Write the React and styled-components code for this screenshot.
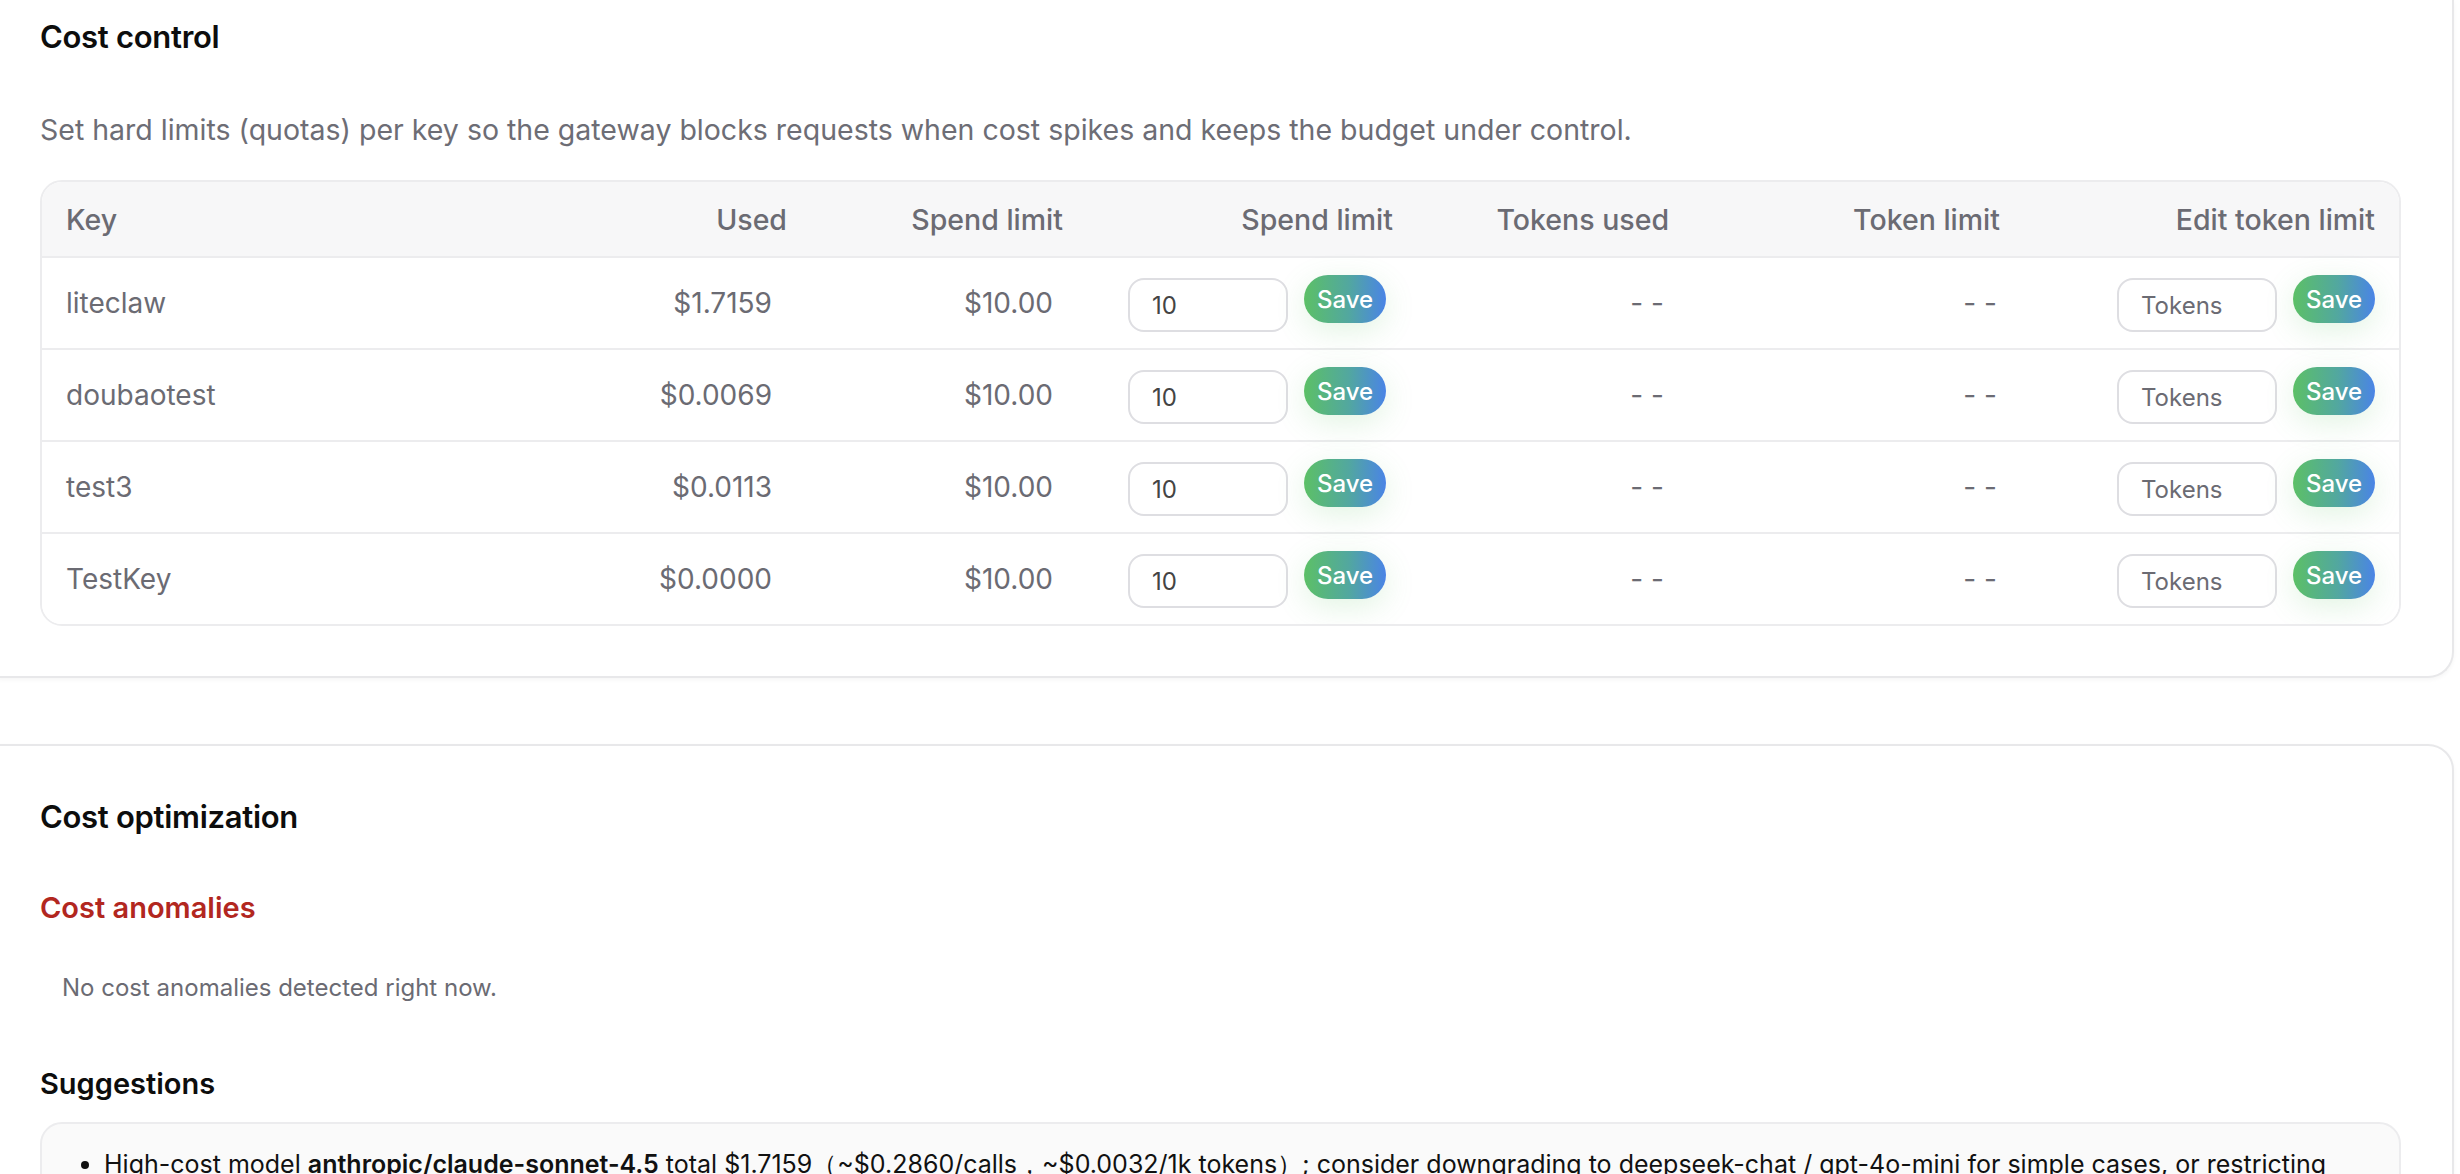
import React from "react";
import styled, { createGlobalStyle } from "styled-components";

const Global = createGlobalStyle`
  html, body { margin: 0; padding: 0; background: #fff; }
  body { font-family: Inter, "Noto Sans", sans-serif; color: #111; }
`;

const Page = styled.div`
  width: 2460px; height: 1174px; overflow: hidden;
  display: flex; flex-direction: column; gap: 66px;
`;
const Card = styled.section`
  width: 2456px; box-sizing: border-box; margin-left: -2px;
  background: #fff; border: 2px solid #e8e8ea;
  border-top: ${p => p.$top ? "none" : "2px solid #e8e8ea"};
  border-radius: ${p => p.$top ? "0 0 26px 0" : "0 26px 0 0"};
  box-shadow: 0 2px 4px rgba(0,0,0,0.04);
  padding: ${p => p.$top ? "18px 51px 50px 40px" : "52px 51px 0 40px"};
`;
const Title = styled.h2`
  margin: 0; font-size: 31px; font-weight: 600; letter-spacing: -0.3px; color: #0d0d0d; line-height: 38px;
`;
const Desc = styled.p`
  margin: 56px 0 32px; font-size: 28.5px; color: #6d6d75; line-height: 36px;
`;
const Table = styled.div`
  border: 2px solid #ececee; border-radius: 22px; overflow: hidden;
`;
const cols = "562px 200px 276px 330px 276px 331px 1fr";
const Row = styled.div`
  display: grid; grid-template-columns: ${cols}; align-items: center;
  height: ${p => p.$head ? 74 : 90}px;
  background: ${p => p.$head ? "#f7f7f8" : "#fff"};
  & + & { border-top: 2px solid #ececee; }
`;
const Cell = styled.div`
  font-size: ${p => p.$head ? 28.5 : 28}px; font-weight: ${p => p.$head ? 500 : 400};
  color: #6b6b73; text-align: ${p => p.$left ? "left" : "right"};
  padding: ${p => p.$left ? "0 0 0 24px" : p.$head ? "0 17px 0 0" : `0 ${p.$pr ?? 30}px 0 0`};
  display: ${p => p.$edit ? "flex" : "block"}; justify-content: flex-end; align-items: center; gap: 16px;
`;
const Input = styled.div`
  width: 160px; height: 54px; box-sizing: border-box; border: 2px solid #dedee2; border-radius: 16px;
  background: #fff; display: flex; align-items: center; padding-left: 22px;
  font-size: 24px; color: ${p => p.$ph ? "#6b6b73" : "#444"}; margin-top: 4px;
`;
const Save = styled.button`
  width: 82px; height: 48px; border: none; border-radius: 24px; margin-top: -8px;
  background: linear-gradient(90deg, #5cc066 0%, #52a7a0 55%, #4a84e6 100%);
  color: #fff; font-family: Inter, sans-serif; font-size: 24px; font-weight: 500;
  box-shadow: 0 8px 30px rgba(92,192,102,0.18);
`;
const SubTitle = styled.h3`
  margin: ${p => p.$mt}px 0 0; font-size: 29px; font-weight: 600; line-height: 36px;
  color: ${p => p.$red ? "#b2271f" : "#0d0d0d"};
`;
const Muted = styled.p`
  margin: 47px 0 0 22px; font-size: 24px; color: #6b6b73;
`;
const Box = styled.div`
  margin-top: 20px; border: 2px solid #ececee; border-radius: 22px; background: #fafafa;
  padding: 20px 40px; height: 200px;
`;
const Li = styled.ul`
  margin: 0; padding-left: 22px; font-size: 25px; color: #111; line-height: 40px;
  b { font-weight: 600; }
`;

const rows = [
  ["liteclaw", "$1.7159"],
  ["doubaotest", "$0.0069"],
  ["test3", "$0.0113"],
  ["TestKey", "$0.0000"],
];

export default function App() {
  return (
    <Page>
      <Global />
      <Card $top>
        <Title>Cost control</Title>
        <Desc>Set hard limits (quotas) per key so the gateway blocks requests when cost spikes and keeps the budget under control.</Desc>
        <Table>
          <Row $head>
            <Cell $head $left>Key</Cell>
            <Cell $head>Used</Cell>
            <Cell $head>Spend limit</Cell>
            <Cell $head>Spend limit</Cell>
            <Cell $head>Tokens used</Cell>
            <Cell $head>Token limit</Cell>
            <Cell $head style={{ paddingRight: 24 }}>Edit token limit</Cell>
          </Row>
          {rows.map(([k, u]) => (
            <Row key={k}>
              <Cell $left>{k}</Cell>
              <Cell $pr={32}>{u}</Cell>
              <Cell $pr={27}>$10.00</Cell>
              <Cell $edit $pr={24}><Input>10</Input><Save>Save</Save></Cell>
              <Cell $pr={22}>- -</Cell>
              <Cell $pr={20}>- -</Cell>
              <Cell $edit $pr={24}><Input $ph>Tokens</Input><Save>Save</Save></Cell>
            </Row>
          ))}
        </Table>
      </Card>
      <Card>
        <Title>Cost optimization</Title>
        <SubTitle $red $mt={54}>Cost anomalies</SubTitle>
        <Muted>No cost anomalies detected right now.</Muted>
        <SubTitle $mt={64}>Suggestions</SubTitle>
        <Box>
          <Li><li>High-cost model <b>anthropic/claude-sonnet-4.5</b> total $1.7159（~$0.2860/calls，~$0.0032/1k tokens）; consider downgrading to deepseek-chat / gpt-4o-mini for simple cases, or restricting this model to few scenarios.</li></Li>
        </Box>
      </Card>
    </Page>
  );
}
